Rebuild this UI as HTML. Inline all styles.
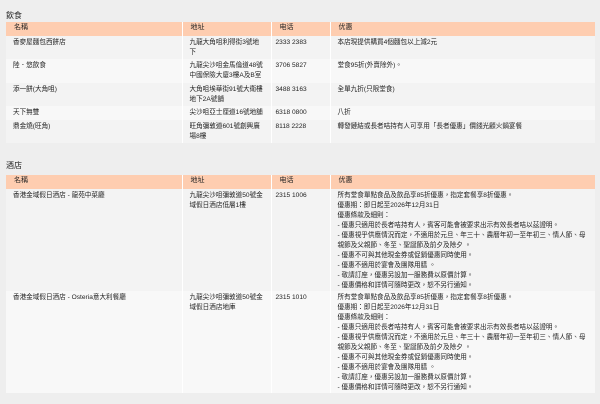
<!DOCTYPE html>
<html><head><meta charset="utf-8"><style>
body{margin:0;background:#eeeeee;width:600px;height:404px;overflow:hidden;font-family:"Liberation Sans","Noto Sans CJK TC",sans-serif;color:#222;}
h2{position:absolute;left:6px;margin:0;font-size:8px;font-weight:normal;color:#222;}
table{position:absolute;left:6px;width:589px;border-collapse:collapse;table-layout:fixed;font-size:6.6px;line-height:10px;}
td,th{vertical-align:top;padding:2px 0 0 0;border-left:1px solid #fff;}
td:first-child,th:first-child{border-left:none;}
th{background:#fecdb0;font-weight:normal;text-align:left;font-size:7px;height:13px;padding:1px 0 0 0;}
th div{padding-left:8px;}
td div{padding-left:7px;padding-right:5px;}
tr.a td{background:#f3f3f3;}
tr.b td{background:#f8f8f8;}
</style></head><body>
<h2 style="top:10px">飲食</h2>
<table style="top:22px">
<colgroup><col style="width:176px"><col style="width:89px"><col style="width:59px"><col></colgroup>
<tr><th><div>名稱</div></th><th><div>地址</div></th><th><div>电话</div></th><th><div>优惠</div></th></tr>
<tr class="a" style="height:23px"><td><div>香麥屋麵包西餅店</div></td><td><div>九龍大角咀利得街3號地下</div></td><td><div style="padding-left:4px">2333 2383</div></td><td><div>本店現提供購買4個麵包以上減2元</div></td></tr>
<tr class="b" style="height:24px"><td><div>陸．悠飲食</div></td><td><div>九龍尖沙咀金馬倫道48號中國保險大廈3樓A及B室</div></td><td><div style="padding-left:4px">3706 5827</div></td><td><div>堂食95折(外賣除外)。</div></td></tr>
<tr class="a" style="height:23px"><td><div>添一餅(大角咀)</div></td><td><div>大角咀埃華街91號大衛樓地下2A號舖</div></td><td><div style="padding-left:4px">3488 3163</div></td><td><div>全單九折(只限堂食)</div></td></tr>
<tr class="b" style="height:14px"><td><div>天下無雙</div></td><td><div>尖沙咀亞士厘道16號地舖</div></td><td><div style="padding-left:4px">6318 0800</div></td><td><div>八折</div></td></tr>
<tr class="a" style="height:23px"><td><div>鼎金燒(旺角)</div></td><td><div>旺角彌敦道601號創興廣場8樓</div></td><td><div style="padding-left:4px">8118 2228</div></td><td><div>轉發鏈結或長者咭持有人可享用「長者優惠」價錢光顧火鍋宴餐</div></td></tr>
</table>
<h2 style="top:160px">酒店</h2>
<table style="top:175px">
<colgroup><col style="width:176px"><col style="width:89px"><col style="width:59px"><col></colgroup>
<tr><th><div>名稱</div></th><th><div>地址</div></th><th><div>电话</div></th><th><div>优惠</div></th></tr>
<tr class="a" style="height:101px"><td><div>香港金域假日酒店 - 龍苑中菜廳</div></td><td><div>九龍尖沙咀彌敦道50號金域假日酒店低層1樓</div></td><td><div style="padding-left:4px">2315 1006</div></td><td><div>所有堂食單點食品及飲品享85折優惠，指定套餐享8折優惠。<br>優惠期：即日起至2026年12月31日<br>優惠條款及細則：<br>- 優惠只適用於長者咭持有人，賓客可能會被要求出示有效長者咭以茲證明。<br>- 優惠視乎供應情況而定，不適用於元旦、年三十、農曆年初一至年初三、情人節、母親節及父親節、冬至、聖誕節及前夕及除夕 。<br>- 優惠不可與其他現金券或促銷優惠同時使用。<br>- 優惠不適用於宴會及團隊用膳 。<br>- 敬請訂座，優惠另設加一服務費以原價計算。<br>- 優惠價格和詳情可隨時更改，恕不另行通知。</div></td></tr>
<tr class="b" style="height:102px"><td><div>香港金域假日酒店 - Osteria意大利餐廳</div></td><td><div>九龍尖沙咀彌敦道50號金域假日酒店地庫</div></td><td><div style="padding-left:4px">2315 1010</div></td><td><div>所有堂食單點食品及飲品享85折優惠，指定套餐享8折優惠。<br>優惠期：即日起至2026年12月31日<br>優惠條款及細則：<br>- 優惠只適用於長者咭持有人，賓客可能會被要求出示有效長者咭以茲證明。<br>- 優惠視乎供應情況而定，不適用於元旦、年三十、農曆年初一至年初三、情人節、母親節及父親節、冬至、聖誕節及前夕及除夕 。<br>- 優惠不可與其他現金券或促銷優惠同時使用。<br>- 優惠不適用於宴會及團隊用膳 。<br>- 敬請訂座，優惠另設加一服務費以原價計算。<br>- 優惠價格和詳情可隨時更改，恕不另行通知。</div></td></tr>
</table>
</body></html>
